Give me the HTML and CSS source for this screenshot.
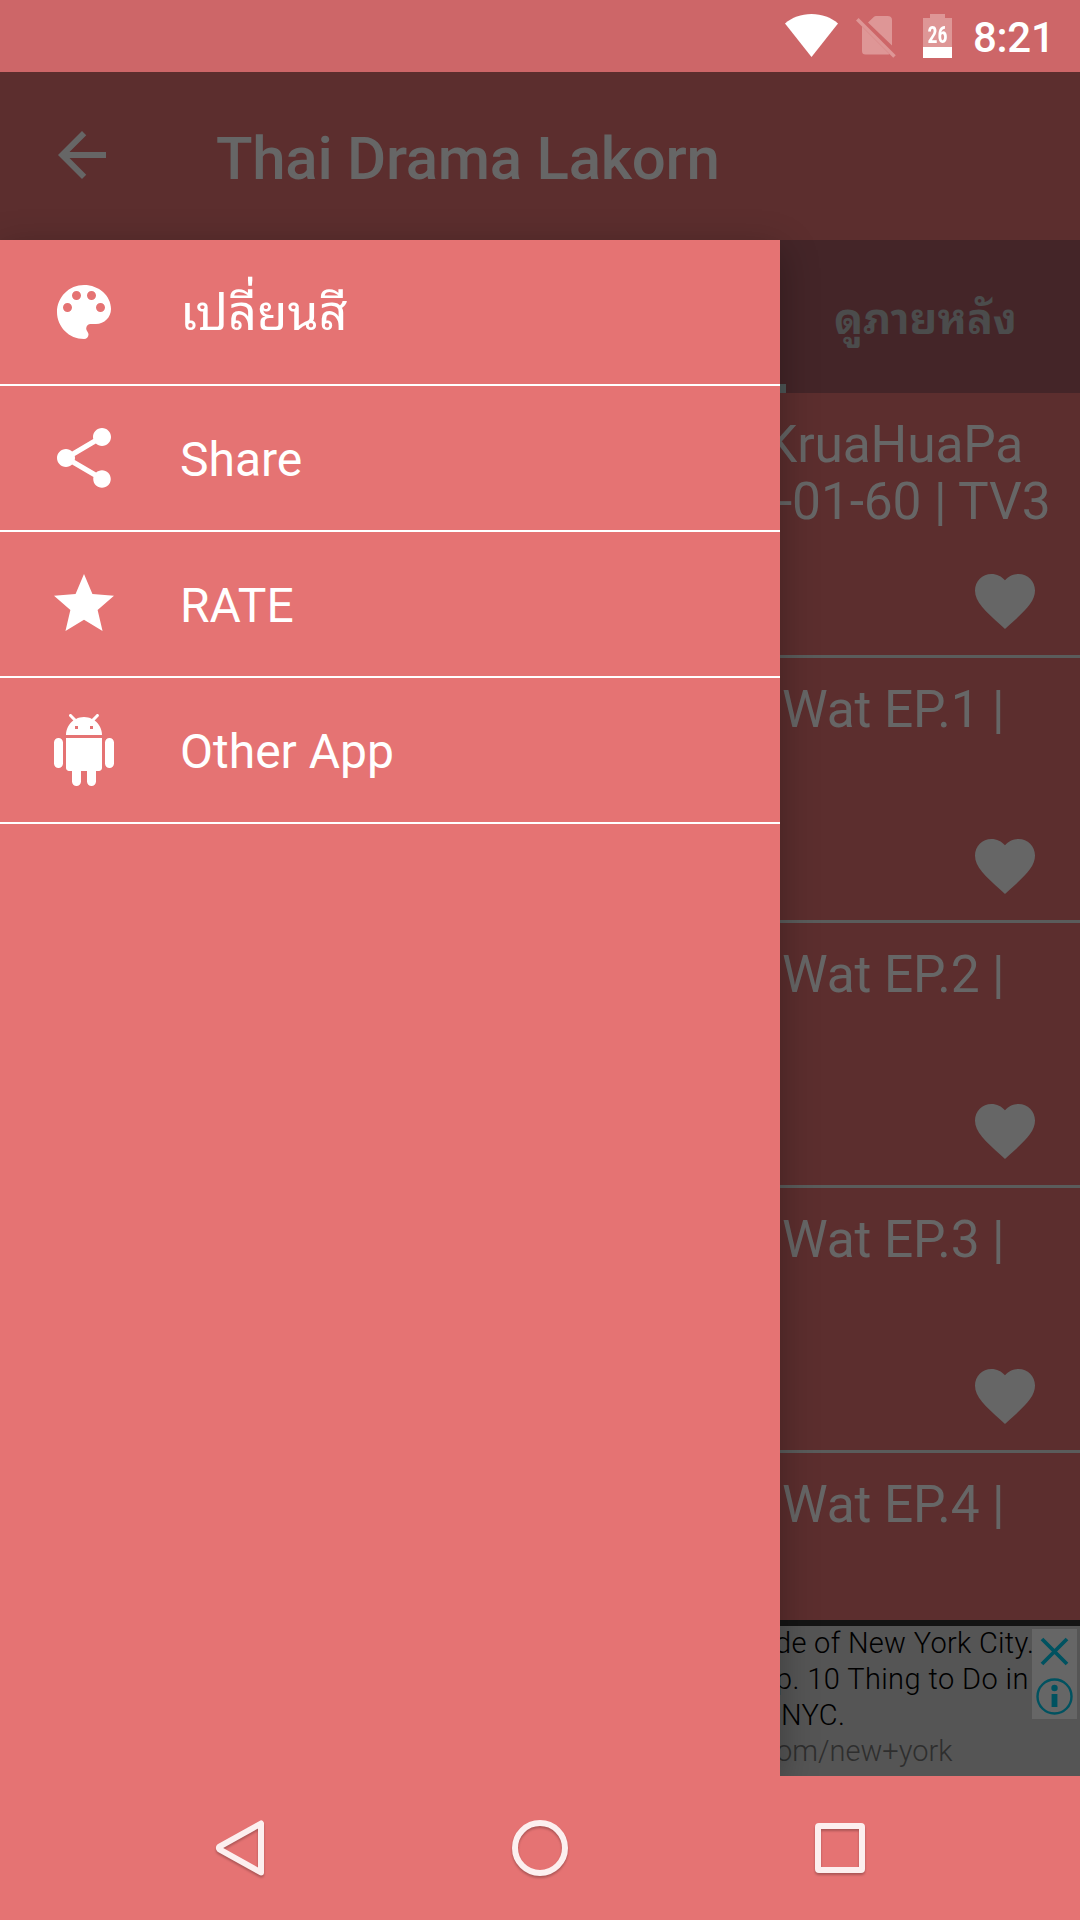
FILE: index.html
```html
<!DOCTYPE html>
<html lang="th">
<head>
<meta charset="utf-8">
<title>Thai Drama Lakorn</title>
<link rel="stylesheet" href="styles.css">
</head>
<body>
<div class="screen">
  <header class="status">
    <svg class="wifi" width="53" height="43" viewBox="0 0 53 43"><path fill="#fff" d="M26.500 43 0 9.500C7 3.500 16 0 26.500 0S46 3.500 53 9.500z"/></svg>
    <svg class="sim" width="40" height="42" viewBox="0 0 40 42"><path fill="#de9696" d="M12 6.500 18 .8Q18.800 0 20 0H31.500Q36 0 36 4V29.500zM6 10.500 33.500 38Q33 38.500 31 38.500H9.500Q6 38.500 6 35z"/><path stroke="#de9696" stroke-width="3.600" d="M1.300 3.300 38.500 40.500"/></svg>
    <div class="battery"><span class="battery-level">26</span></div>
    <span class="clock">8:21</span>
  </header>
  <div class="appbar">
    <svg width="72" height="72" viewBox="0 0 24 24"><path fill="#666" d="M20 11H7.830l5.590-5.590L12 4l-8 8 8 8 1.410-1.410L7.830 13H20v-2z"/></svg>
    <h1>Thai Drama Lakorn</h1>
  </div>
  <main class="body">
    <nav class="drawer">
      <a class="item">
        <svg width="72" height="72" viewBox="0 0 24 24"><path d="M12 3c-4.970 0-9 4.030-9 9s4.030 9 9 9c.83 0 1.500-.67 1.500-1.500 0-.39-.15-.74-.39-1.010-.23-.26-.38-.61-.38-.99 0-.83.67-1.500 1.500-1.500H16c2.760 0 5-2.240 5-5 0-4.420-4.030-8-9-8zm-5.500 9c-.83 0-1.500-.67-1.500-1.500S5.670 9 6.500 9 8 9.670 8 10.500 7.330 12 6.500 12zm3-4C8.670 8 8 7.330 8 6.500S8.670 5 9.500 5s1.500.67 1.500 1.500S10.330 8 9.500 8zm5 0c-.83 0-1.500-.67-1.500-1.500S13.670 5 14.500 5s1.500.67 1.500 1.500S15.330 8 14.500 8zm3 4c-.83 0-1.500-.67-1.500-1.500S16.670 9 17.500 9s1.500.67 1.500 1.500-.67 1.500-1.500 1.500z"/></svg>
        <span class="thai">เปลี่ยนสี</span>
      </a>
      <a class="item">
        <svg width="72" height="72" viewBox="0 0 24 24"><path d="M18 16.080c-.76 0-1.440.3-1.960.77L8.910 12.700c.05-.23.09-.46.09-.7s-.04-.47-.09-.7l7.050-4.110c.54.5 1.250.81 2.040.81 1.660 0 3-1.340 3-3s-1.340-3-3-3-3 1.340-3 3c0 .24.04.47.09.7L8.040 9.810C7.500 9.310 6.790 9 6 9c-1.660 0-3 1.340-3 3s1.340 3 3 3c.79 0 1.500-.31 2.040-.81l7.120 4.160c-.05.21-.08.43-.08.65 0 1.610 1.310 2.920 2.920 2.920s2.920-1.310 2.920-2.920-1.310-2.920-2.920-2.920z"/></svg>
        <span>Share</span>
      </a>
      <a class="item">
        <svg width="72" height="72" viewBox="0 0 24 24"><path d="M12 17.270 18.180 21l-1.640-7.030L22 9.240l-7.190-.61L12 2 9.190 8.630 2 9.240l5.460 4.730L5.820 21z"/></svg>
        <span>RATE</span>
      </a>
      <a class="item">
        <svg width="72" height="72" viewBox="0 0 24 24"><path d="M6 18c0 .55.45 1 1 1h1v3.500c0 .83.67 1.500 1.500 1.500s1.500-.67 1.500-1.500V19h2v3.500c0 .83.67 1.500 1.500 1.500s1.500-.67 1.500-1.500V19h1c.55 0 1-.45 1-1V8H6v10zM3.500 8C2.670 8 2 8.670 2 9.500v7c0 .83.67 1.500 1.500 1.500S5 17.330 5 16.500v-7C5 8.670 4.330 8 3.500 8zm17 0c-.83 0-1.500.67-1.500 1.500v7c0 .83.67 1.500 1.500 1.500s1.500-.67 1.500-1.500v-7c0-.83-.67-1.500-1.500-1.500zm-4.970-5.840 1.300-1.300c.2-.2.2-.51 0-.71-.2-.2-.51-.2-.71 0l-1.480 1.480C13.850 1.230 12.950 1 12 1c-.96 0-1.860.23-2.660.63L7.850.15c-.2-.2-.51-.2-.71 0-.2.2-.2.51 0 .71l1.310 1.310C6.970 3.260 6 5.010 6 7h12c0-1.990-.97-3.750-2.470-4.840zM10 5H9V4h1v1zm5 0h-1V4h1v1z"/></svg>
        <span>Other App</span>
      </a>
    </nav>
    <section class="content">
      <div class="tabs"><span class="tab">ดูภายหลัง</span><div class="indicator"></div></div>
      <article class="row first"><p><span class="line-a">KruaHuaPa</span><span class="line-b">-01-60 | TV3</span></p>
        <svg width="72" height="72" viewBox="0 0 24 24"><path d="m12 21.350-1.450-1.320C5.400 15.360 2 12.280 2 8.500 2 5.420 4.420 3 7.500 3c1.740 0 3.410.81 4.500 2.090C13.090 3.810 14.760 3 16.500 3 19.580 3 22 5.420 22 8.500c0 3.780-3.400 6.860-8.550 11.540z"/></svg></article>
      <article class="row"><p>Wat EP.1 |</p>
        <svg width="72" height="72" viewBox="0 0 24 24"><path d="m12 21.350-1.450-1.320C5.400 15.360 2 12.280 2 8.500 2 5.420 4.420 3 7.500 3c1.740 0 3.410.81 4.500 2.090C13.090 3.810 14.760 3 16.500 3 19.580 3 22 5.420 22 8.500c0 3.780-3.400 6.860-8.550 11.540z"/></svg></article>
      <article class="row"><p>Wat EP.2 |</p>
        <svg width="72" height="72" viewBox="0 0 24 24"><path d="m12 21.350-1.450-1.320C5.400 15.360 2 12.280 2 8.500 2 5.420 4.420 3 7.500 3c1.740 0 3.410.81 4.500 2.090C13.090 3.810 14.760 3 16.500 3 19.580 3 22 5.420 22 8.500c0 3.780-3.400 6.860-8.550 11.540z"/></svg></article>
      <article class="row"><p>Wat EP.3 |</p>
        <svg width="72" height="72" viewBox="0 0 24 24"><path d="m12 21.350-1.450-1.320C5.400 15.360 2 12.280 2 8.500 2 5.420 4.420 3 7.500 3c1.740 0 3.410.81 4.500 2.090C13.090 3.810 14.760 3 16.500 3 19.580 3 22 5.420 22 8.500c0 3.780-3.400 6.860-8.550 11.540z"/></svg></article>
      <article class="row last"><p>Wat EP.4 |</p></article>
      <aside class="ad">
        <div class="ad-text">
          <span class="ad-1">de of New York City.</span>
          <span class="ad-2">p. 10 Thing to Do in</span>
          <span class="ad-3">NYC.</span>
          <span class="ad-url">om/new+york</span>
        </div>
        <svg class="ad-badge" width="45" height="90" viewBox="0 0 45 90"><path fill="#666" d="M0 0h45v90H0z"/><g fill="none" stroke="#005260"><path stroke-width="3.800" d="M10 10 35 35M35 10 10 35"/><circle cx="22.500" cy="67.500" r="17" stroke-width="2.400"/></g><g fill="#005260"><circle cx="22.500" cy="59" r="3.200"/><path d="M19.600 65h5.800v13h-5.800z"/></g></svg>
      </aside>
    </section>
  </main>
  <footer class="navbar">
    <svg width="60" height="64" viewBox="0 0 60 64"><path d="M9.500 30.700 51 7.500V56.500L9.500 33.300Q8.200 32 9.500 30.700z"/></svg>
    <svg width="60" height="64" viewBox="0 0 60 64"><circle cx="30" cy="32" r="25"/></svg>
    <svg width="60" height="64" viewBox="0 0 60 64"><rect x="8" y="10" width="44" height="44" rx="1"/></svg>
  </footer>
</div>
</body>
</html>
```
FILE: styles.css
```css
* { box-sizing: border-box; }
body { margin: 0; font-family: Roboto, "Noto Sans Thai Looped", "Noto Looped Thai", Loma, Garuda, Waree, "Noto Sans Thai", "Noto Sans", sans-serif; }
p, h1 { margin: 0; }
svg { display: block; flex: none; }

.screen { width: 1080px; height: 1920px; overflow: hidden; display: flex; flex-direction: column; background: #e57373; }

.status { height: 72px; flex: none; display: flex; align-items: flex-start; justify-content: flex-end; padding: 14px 27px 0 0; background: #cd6668; color: #fff; }
.sim { margin: 2px 0 0 18px; }
.battery { width: 29px; height: 44px; margin-left: 27px; display: flex; justify-content: center; background: linear-gradient(#de9696 0 33px, #fff 33px); clip-path: polygon(0 4px, 7px 4px, 7px 0, 22px 0, 22px 4px, 100% 4px, 100% 100%, 0 100%); }
.battery-level { font: 700 23px/34px "Roboto Condensed", Roboto, sans-serif; padding: 5px 0 0 1px; transform: scaleX(.86); }
.clock { width: 80px; margin-left: 21px; padding-top: 1px; font-size: 42px; font-weight: 500; line-height: 46px; letter-spacing: -.3px; white-space: nowrap; }

.appbar { height: 168px; flex: none; display: flex; align-items: center; padding-left: 46px; background: #5c2e2e; color: #666; }
.appbar svg { margin-top: -2px; }
.appbar h1 { margin-left: 98px; padding-top: 5px; font-size: 60px; font-weight: 500; line-height: 70px; letter-spacing: -.28px; white-space: nowrap; }

.body { height: 1536px; flex: none; display: flex; }
.drawer { width: 780px; flex: none; position: relative; z-index: 1; background: #e57373; box-shadow: 0 10px 36px rgba(0, 0, 0, .3); }
.item { height: 146px; display: flex; align-items: center; gap: 60px; padding-left: 48px; border-bottom: 2px solid #fff; color: #fff; fill: #fff; font-size: 48px; line-height: 58px; }
.item span { padding-top: 4px; }
.item .thai { padding-top: 2px; font-size: 50px; }

.content { width: 300px; flex: none; display: flex; flex-direction: column; overflow: hidden; background: #5c2e2e; color: #666; }
.tabs { height: 153px; flex: none; display: flex; flex-direction: column; justify-content: space-between; background: #442528; color: #4b4c4c; }
.tab { padding: 54px 0 0 54px; font-size: 43px; font-weight: 700; line-height: 50px; white-space: nowrap; }
.indicator { width: 6px; height: 9px; background: #4e5757; }

.row { height: 265px; flex: none; display: flex; flex-direction: column; align-items: flex-end; justify-content: space-between; padding: 23px 39px 18px 0; border-bottom: 3px solid #5a5c5b; fill: #666; }
.row p { align-self: flex-start; margin-left: 2px; font-size: 51.500px; line-height: 57px; letter-spacing: -.15px; white-space: nowrap; }
.row p span { display: block; }
.line-a { margin-left: -17px; }
.line-b { margin-left: -4px; }
.row.last { height: 167px; border: 0; }

.ad { height: 156px; flex: none; display: flex; border-top: 6px solid #141414; background: #555; font-size: 29px; font-weight: 300; line-height: 36px; letter-spacing: .3px; color: #000; white-space: nowrap; }
.ad-text { width: 252px; margin-top: -1px; }
.ad-text span { display: block; }
.ad-1 { margin-left: -5px; }
.ad-2 { margin-left: -4px; letter-spacing: .4px; }
.ad-3 { margin-left: 1px; }
.ad-url { margin-left: -4px; letter-spacing: 0; color: #2e2e2e; }
.ad-badge { margin-top: 3px; }

.navbar { height: 144px; flex: none; position: relative; z-index: 2; display: flex; align-items: center; justify-content: center; gap: 240px; background: #e57373; }
.navbar svg { fill: none; stroke: #fcefef; stroke-width: 6; stroke-linejoin: round; filter: drop-shadow(0 2px 1px rgba(0, 0, 0, .25)); }
```
